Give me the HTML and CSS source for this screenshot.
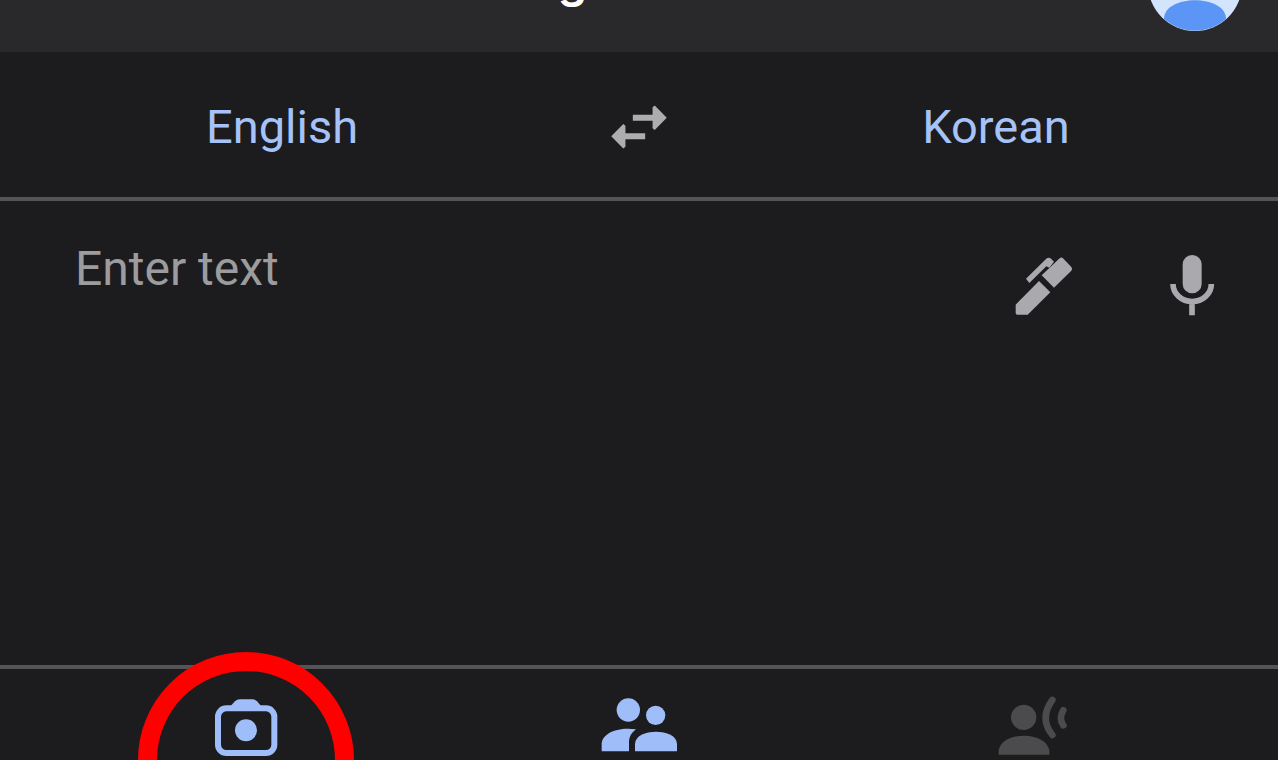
FILE: index.html
```html
<!DOCTYPE html>
<html lang="en">
<head>
<meta charset="utf-8">
<meta name="viewport" content="width=device-width, initial-scale=1">
<title>Google Translate</title>
<link rel="stylesheet" href="styles.css">
</head>
<body>
<div class="app">
  <header class="topbar">
    <h1 class="title">Google Translate</h1>
    <button class="avatar" type="button" aria-label="Account">
      <svg width="96" height="96" viewBox="0 0 96 96" aria-hidden="true">
        <circle cx="48" cy="48" r="47" fill="#d3e5fd"/>
        <circle cx="48" cy="36" r="17" fill="#5b95f5"/>
        <path d="M17 83C17 58 79 58 79 83A47 47 0 0 1 17 83z" fill="#5b95f5"/>
      </svg>
    </button>
  </header>

  <div class="languages">
    <button class="language" type="button">English</button>
    <button class="swap" type="button" aria-label="Swap languages">
      <svg width="74" height="74" viewBox="0 0 24 24" aria-hidden="true">
        <path d="M6.900 11 3 15l3.900 4 .7-.6v-2.400H14v-2H7.600v-2.400zM21 9l-3.900-4-.7.6V8H10v2h6.400v2.400l.7.6z"/>
      </svg>
    </button>
    <button class="language" type="button">Korean</button>
  </div>

  <main class="entry">
    <textarea class="entry-text" aria-label="Enter text" placeholder="Enter text"></textarea>
    <div class="tools">
      <button class="tool" type="button" aria-label="Handwriting">
        <svg width="64" height="64" viewBox="63 57 192 192" aria-hidden="true">
          <path d="M77 209 147 138 181 172 113 239H82Q77 239 77 234z"/>
          <path d="M155 121 209 70Q214 65 219 70L244 96Q249 102 244 107L192 158z"/>
          <path d="M108 131 168 72Q176 65 184 72L192 80 178 98 169 94 118 144z"/>
        </svg>
      </button>
      <button class="tool" type="button" aria-label="Voice input">
        <svg width="64" height="64" viewBox="59 57 192 192" aria-hidden="true">
          <rect x="127" y="60" width="57" height="115" rx="28"/>
          <path d="M98 147a57 52 0 0 0 115 0M155 199v42" fill="none" stroke="currentColor" stroke-width="17"/>
        </svg>
      </button>
    </div>
  </main>

  <nav class="modes" aria-label="Translation modes">
    <button class="mode" type="button" aria-label="Camera">
      <svg width="80" height="64" viewBox="258 162 240 192" aria-hidden="true">
        <rect x="294" y="205" width="169" height="134" rx="25" fill="none" stroke="currentColor" stroke-width="18"/>
        <path d="M327 203 345 184Q351 178 359 178H397Q405 178 411 184L428 203V213H327z"/>
        <circle cx="378" cy="271" r="33"/>
      </svg>
      <span class="highlight"></span>
    </button>
    <button class="mode" type="button" aria-label="Conversation">
      <svg width="80" height="64" viewBox="57 117 240 192" aria-hidden="true">
        <circle cx="145" cy="165" r="35"/>
        <circle cx="227" cy="181" r="29"/>
        <path d="M65 289V269C65 235 112 215 168 223 153 234 147 247 147 263V289z"/>
        <path d="M165 289V267C165 218 291 218 291 267V289z"/>
      </svg>
    </button>
    <button class="mode" type="button" aria-label="Transcribe" disabled>
      <svg width="80" height="64" viewBox="33 117 240 192" aria-hidden="true">
        <circle cx="128" cy="187" r="38"/>
        <path d="M53 299V287C60 227 196 227 205 287V299z"/>
        <path d="M214 135Q174 190 214 240M247 166Q232 190 247 211" fill="none" stroke="currentColor" stroke-width="20" stroke-linecap="round"/>
      </svg>
    </button>
  </nav>
</div>
</body>
</html>
```
FILE: styles.css
```css
* {
  box-sizing: border-box;
}

body {
  margin: 0;
  background: #1c1c1e;
  font-family: Roboto, "Liberation Sans", sans-serif;
}

button {
  padding: 0;
  border: 0;
  background: none;
  color: inherit;
  font: inherit;
}

svg {
  display: block;
  fill: currentColor;
}

.app {
  display: flex;
  flex-direction: column;
  min-height: 100vh;
  overflow: hidden;
}

.topbar {
  display: grid;
  grid-template-columns: 1fr auto 1fr;
  grid-template-rows: 52px;
  align-items: end;
  padding: 0 35px;
  background: #29292b;
}

.title {
  grid-column: 2;
  margin: 0 0 44px;
  padding-left: 38px;
  color: #fff;
  font-family: Inter, sans-serif;
  font-size: 47px;
  font-weight: 600;
  line-height: 56px;
}

.avatar {
  justify-self: end;
  margin-bottom: 20px;
}

.languages {
  display: grid;
  grid-template-columns: 1fr 150px 1fr;
  align-items: center;
  padding-top: 4px;
  border-bottom: 4px solid #545456;
}

.language {
  height: 141px;
  color: #a5c3f8;
  font-size: 47px;
}

.swap {
  display: flex;
  justify-content: center;
  color: #adadaf;
}

.entry {
  display: flex;
  flex: 1;
  gap: 40px;
  padding: 40px 54px 40px 75px;
}

.entry-text {
  flex: 1;
  min-width: 0;
  padding: 0;
  border: 0;
  outline: 0;
  background: none;
  color: #e8eaed;
  font: inherit;
  font-size: 48px;
  line-height: 56px;
  resize: none;
}

.entry-text::placeholder {
  color: #9c9c9f;
  opacity: 1;
}

.tools {
  display: flex;
  align-items: flex-start;
  gap: 85px;
  padding-top: 13px;
  color: #a9a9ae;
}

.modes {
  display: grid;
  grid-template-columns: repeat(3, 1fr);
  padding: 0 50px;
  border-top: 4px solid #545456;
}

.mode {
  position: relative;
  display: flex;
  justify-content: center;
  padding: 25px 0 2px;
  color: #9fbdf9;
}

.mode:disabled {
  color: #4b4b4d;
}

.highlight {
  position: absolute;
  top: -17px;
  left: 50%;
  width: 216px;
  height: 216px;
  border: 19px solid #f00;
  border-radius: 50%;
  transform: translateX(-50%);
  pointer-events: none;
}
```
